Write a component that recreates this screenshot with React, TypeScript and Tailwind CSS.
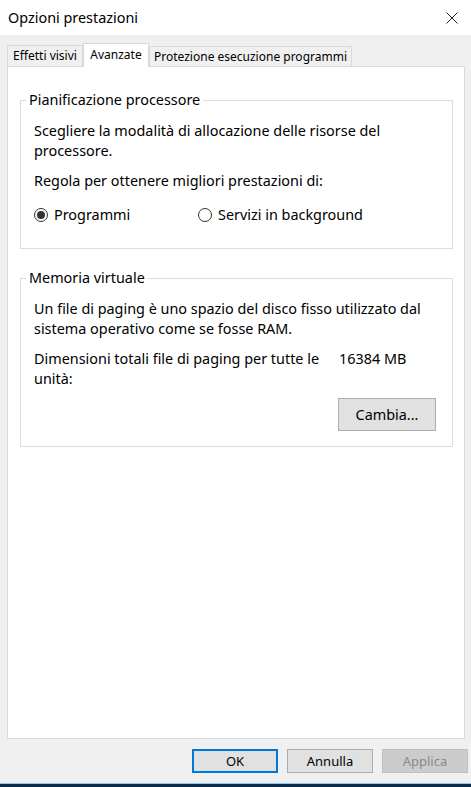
import React from "react";

const font = { fontFamily: '"Noto Sans", "Open Sans", sans-serif' };

function Radio({ checked, label }: { checked: boolean; label: string }) {
  return (
    <div className="flex items-center">
      <span className="w-[14px] h-[14px] rounded-full border border-[#333333] bg-white flex items-center justify-center">
        {checked && <span className="w-[8px] h-[8px] rounded-full bg-[#333333]" />}
      </span>
      <span className="ml-[6px]">{label}</span>
    </div>
  );
}

export default function App() {
  return (
    <div
      className="w-[471px] h-[787px] bg-[#f0f0f0] flex flex-col text-[14.4px] text-black leading-[20px]"
      style={font}
    >
      {/* Title bar */}
      <div className="h-[35px] bg-white flex items-center justify-between pl-[8px] pr-[12px] shrink-0">
        <span className="text-[14.4px]">Opzioni prestazioni</span>
        <svg width="12" height="12" viewBox="0 0 12 12" className="mr-[1px]">
          <path d="M0.5 0.5 L11.5 11.5 M11.5 0.5 L0.5 11.5" stroke="#222" strokeWidth="1" fill="none" />
        </svg>
      </div>

      <div className="px-[7px] pt-[8px] pr-[6px]">
        {/* Tabs */}
        <div className="flex items-end h-[24px] relative z-10 -mb-[1px] text-[12px] leading-[18px]">
          <div className="h-[22px] w-[76px] border border-[#d9d9d9] bg-[#f0f0f0] flex items-center justify-center">
            Effetti visivi
          </div>
          <div className="h-[24px] w-[66px] border border-b-0 border-[#d9d9d9] bg-white flex items-center justify-center pb-[1px]">
            Avanzate
          </div>
          <div className="h-[21px] w-[203px] border border-[#d9d9d9] bg-[#f0f0f0] flex items-center justify-center">
            Protezione esecuzione programmi
          </div>
        </div>

        {/* Panel */}
        <div className="h-[673px] bg-white border border-[#d9d9d9] pl-[12px] pr-[11px] pt-[23px]">
          <fieldset className="border border-[#dcdcdc] pb-[23px]">
            <legend className="ml-[5px] px-[3px]">Pianificazione processore</legend>
            <div className="pt-[11px] pl-[13px]">
              <p>Scegliere la modalità di allocazione delle risorse del<br />processore.</p>
              <p className="mt-[10px]">Regola per ottenere migliori prestazioni di:</p>
              <div className="mt-[14px] flex">
                <div className="w-[164px]">
                  <Radio checked label="Programmi" />
                </div>
                <Radio checked={false} label="Servizi in background" />
              </div>
            </div>
          </fieldset>

          <fieldset className="mt-[19px] border border-[#dcdcdc] pb-[15px] pr-[16px]">
            <legend className="ml-[5px] px-[3px]">Memoria virtuale</legend>
            <div className="pt-[11px] pl-[13px]">
              <p>Un file di paging è uno spazio del disco fisso utilizzato dal<br />sistema operativo come se fosse RAM.</p>
              <div className="mt-[10px] flex">
                <p className="w-[305px]">Dimensioni totali file di paging per tutte le<br />unità:</p>
                <p>16384 MB</p>
              </div>
              <div className="mt-[9px] flex justify-end">
                <button className="w-[98px] h-[33px] bg-[#e1e1e1] border border-[#adadad]">
                  Cambia...
                </button>
              </div>
            </div>
          </fieldset>
        </div>
      </div>

      {/* Bottom buttons */}
      <div className="flex justify-end pr-[3px] mt-[10px] text-[13px]">
        <button className="w-[86px] h-[24px] bg-[#e1e1e1] border-2 border-[#0078d7]">OK</button>
        <button className="ml-[9px] w-[86px] h-[24px] bg-[#e1e1e1] border border-[#adadad]">Annulla</button>
        <button className="ml-[9px] w-[86px] h-[24px] bg-[#cccccc] border border-[#bfbfbf] text-[#8a8a8a]">
          Applica
        </button>
      </div>

      <div className="mt-auto h-[4px] shrink-0 flex flex-col">
        <div className="h-[1px] bg-[#8ccaf2]" />
        <div className="h-[3px] bg-[#0c2c4c]" />
      </div>
    </div>
  );
}
